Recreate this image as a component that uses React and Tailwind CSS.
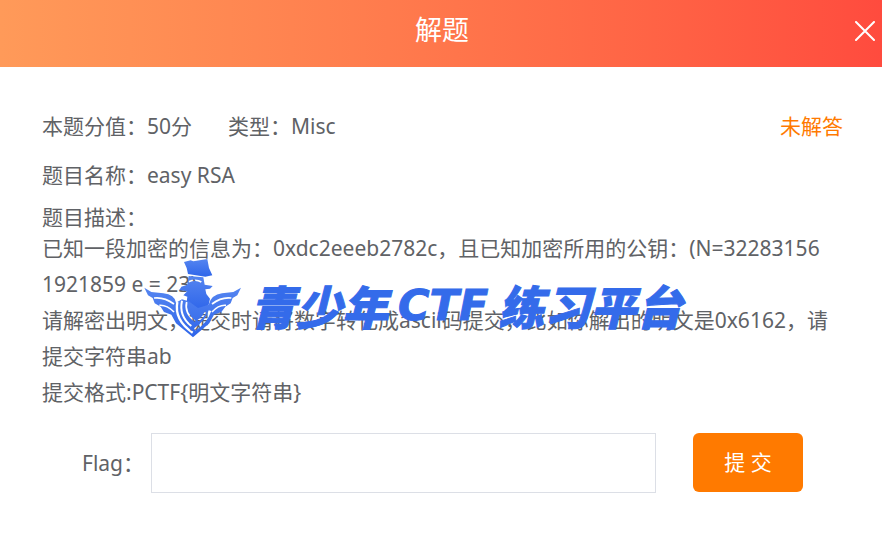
import React, { useState } from "react";

const challenge = {
  score: "50分",
  type: "Misc",
  status: "未解答",
  name: "easy RSA",
  description: [
    "已知一段加密的信息为：0xdc2eeeb2782c，且已知加密所用的公钥：(N=322831561921859 e = 23)",
    "请解密出明文，提交时请将数字转化成ascii码提交，比如你解出的明文是0x6162，请提交字符串ab",
    "提交格式:PCTF{明文字符串}",
  ],
};

// Winged shield with a top-hat figure
function MascotLogo() {
  return (
    <svg className="h-20 w-[98px] shrink-0" viewBox="44 26 294 240" aria-hidden="true">
      <defs>
        <linearGradient id="mascot-fill" x1="0" y1="0" x2="0" y2="1">
          <stop offset="0" stopColor="#5585f0" />
          <stop offset="1" stopColor="#2f66ea" />
        </linearGradient>
        {/* Cut-outs between the feathers and the shield stripes */}
        <mask id="mascot-cuts" maskUnits="userSpaceOnUse" x="44" y="26" width="294" height="240">
          <rect x="44" y="26" width="294" height="240" fill="#fff" />
          <g fill="none" stroke="#000" strokeWidth="5">
            <path d="M74 146 Q104 142 134 164" />
            <path d="M90 168 Q112 166 134 188" />
            <path d="M306 146 Q276 142 248 164" />
            <path d="M290 168 Q268 166 248 188" />
            <path d="M144 158 Q134 212 190 250" strokeWidth="7" />
            <path d="M158 154 Q148 200 186 230" strokeWidth="6" />
            <path d="M172 158 Q164 192 198 216" />
            <path d="M196 240 Q230 220 242 184" strokeWidth="8" />
            <path d="M206 214 Q222 204 228 188" />
            <path d="M178 97 Q200 88 216 98" />
          </g>
        </mask>
      </defs>
      <g fill="url(#mascot-fill)" mask="url(#mascot-cuts)">
        <path d="M164 38 L184 33 L192 36 L234 29 L239 56 L249 78 L228 82 L176 74 L172 56 Z" />
        <path d="M178 80 L222 84 L226 106 L250 110 L242 118 L228 120 L231 134 L242 148 L238 166 L220 182 L194 176 L172 158 L174 142 L162 138 L174 126 L150 122 L156 112 L174 106 Z" />
        <path d="M45 115 L66 128 L102 132 Q136 136 140 160 L158 150 L178 156 L206 176 L238 166 Q246 136 278 132 L312 128 L335 115 L324 138 L310 146 L304 162 L288 172 L276 188 L254 196 L240 222 L191 264 L140 222 L126 196 L104 188 L94 172 L76 162 L70 146 L56 138 Z" />
      </g>
    </svg>
  );
}

function Watermark() {
  return (
    <div className="pointer-events-none absolute top-[191px] left-[144px] flex items-center gap-2 select-none">
      <MascotLogo />
      <div className="flex items-center gap-2.5 pt-3.5 font-['Noto_Sans_CJK_SC',sans-serif] text-[46px] leading-none font-black whitespace-nowrap text-[#346bea] italic [-webkit-text-stroke:1px_#346bea]">
        <span>青少年</span>
        <span className="font-['DejaVu_Sans',sans-serif] text-[43px]">CTF</span>
        <span>练习平台</span>
      </div>
    </div>
  );
}

function App() {
  const [flag, setFlag] = useState("");

  const handleSubmit = (e) => {
    e.preventDefault();
  };

  return (
    <div className="min-h-screen bg-white font-['Noto_Sans','Noto_Sans_CJK_SC',sans-serif] text-[21px] text-[#606266]">
      <header className="flex h-[67px] items-center bg-linear-to-r from-[#ff9a59] to-[#ff4b3e] text-white">
        <h1 className="flex-1 pb-2 pl-[42px] text-center text-[27px] leading-9">解题</h1>
        <button type="button" aria-label="关闭" className="flex h-9 w-10 items-center justify-end pr-[7px] pb-1.5">
          <svg className="size-5" viewBox="0 0 20 20" fill="none" stroke="currentColor" strokeWidth="2" strokeLinecap="round">
            <path d="M1 1 L19 19 M19 1 L1 19" />
          </svg>
        </button>
      </header>

      <main className="relative pt-[39px] pr-[39px] pl-10">
        <div className="flex items-center pl-0.5 leading-10">
          <span>本题分值：{challenge.score}</span>
          <span className="ml-9">类型：{challenge.type}</span>
          <span className="ml-auto text-[#ff7a00]">{challenge.status}</span>
        </div>
        <p className="mt-[9px] pl-0.5 leading-10">题目名称：{challenge.name}</p>
        <div className="mt-[9px] pl-0.5">
          <h2 className="leading-[26px]">题目描述：</h2>
          <div className="pr-[13px] leading-9 break-all">
            {challenge.description.map((line) => (
              <p key={line}>{line}</p>
            ))}
          </div>
        </div>

        <form onSubmit={handleSubmit} className="mt-[23px] flex items-start px-10">
          <label htmlFor="flag" className="w-[71px] pl-0.5 leading-[60px] whitespace-nowrap">
            Flag：
          </label>
          <input
            id="flag"
            type="text"
            value={flag}
            onChange={(e) => setFlag(e.target.value)}
            className="h-[60px] min-w-0 flex-1 border border-[#dcdfe6] px-4 outline-none"
          />
          <button type="submit" className="ml-[37px] h-[59px] w-[110px] rounded-md bg-[#ff7a00] text-white">
            提 交
          </button>
        </form>

        <Watermark />
      </main>
    </div>
  );
}

export default App;
